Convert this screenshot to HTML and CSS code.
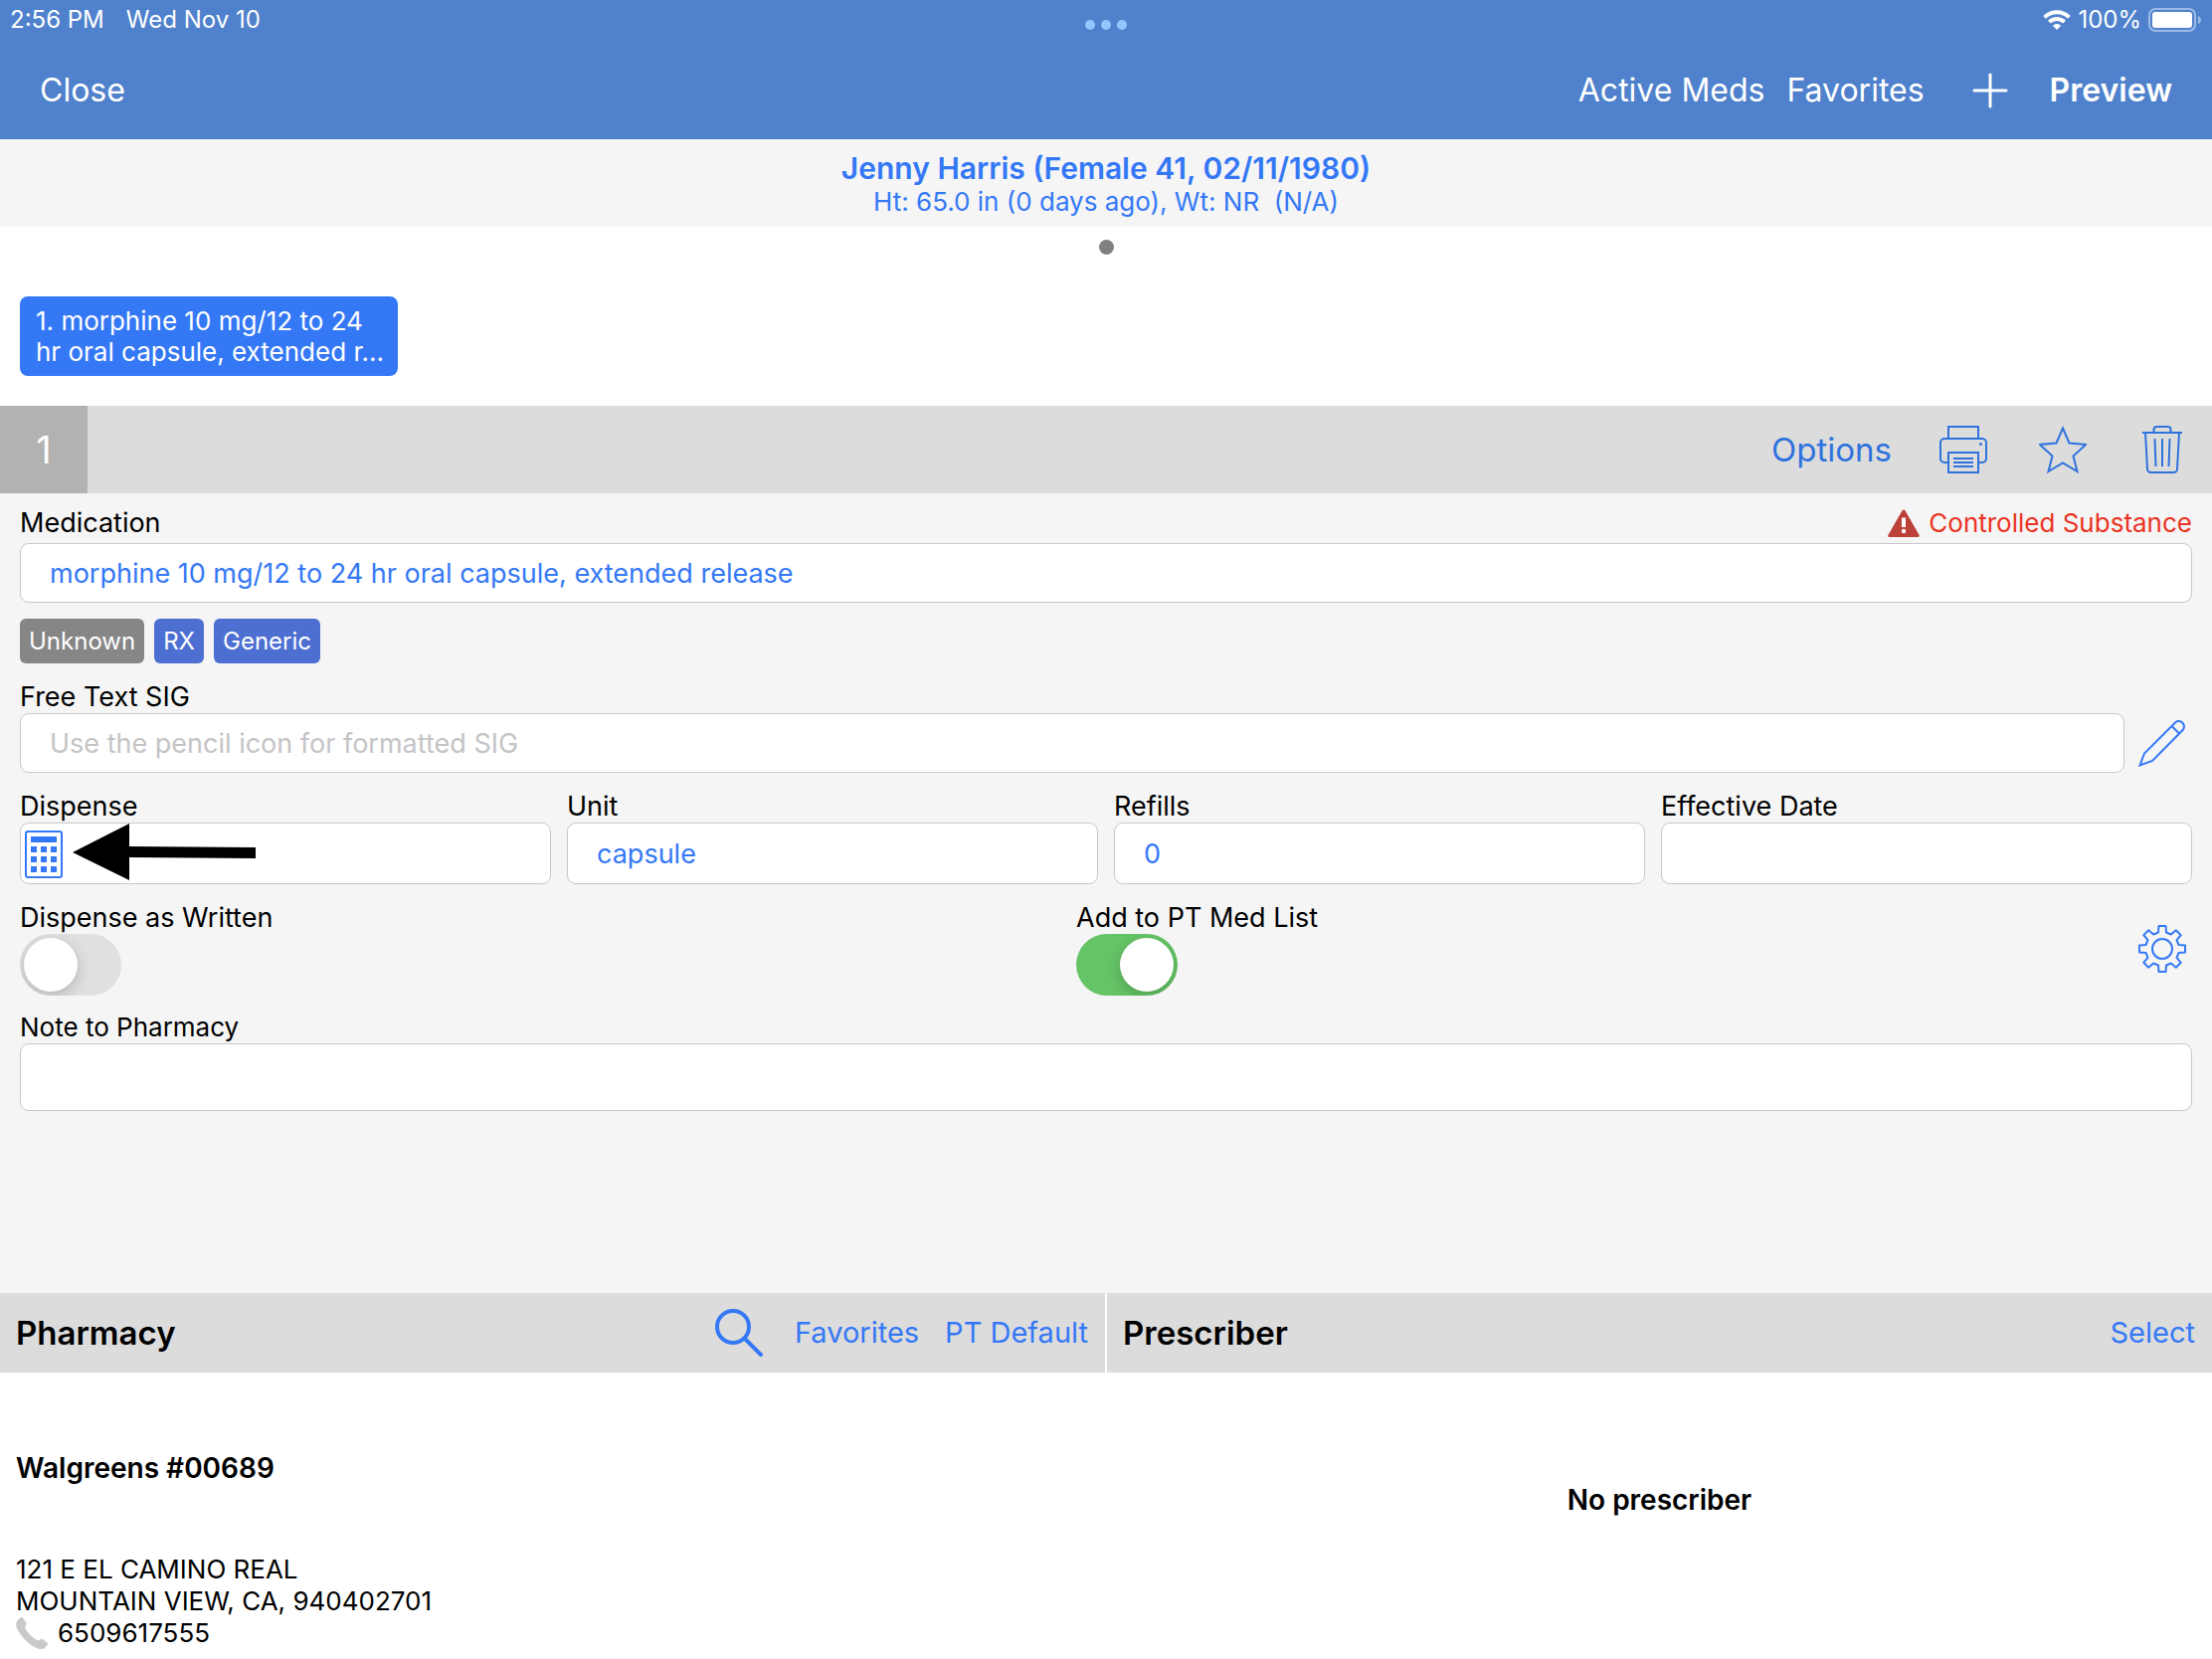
FILE: index.html
```html
<!DOCTYPE html>
<html lang="en">
<head>
<meta charset="utf-8">
<meta name="viewport" content="width=device-width, initial-scale=1">
<title>Prescription</title>
<link rel="stylesheet" href="styles.css">
</head>
<body>
<header class="topbar">
  <div class="status">
    <div class="status-side"><span>2:56 PM</span><span>Wed Nov 10</span></div>
    <div class="dots"><i></i><i></i><i></i></div>
    <div class="status-side status-end">
      <svg class="wifi" viewBox="0 0 28 20" fill="none" stroke="#fff" stroke-width="4"><path d="M1.6 7.4a17.6 17.6 0 0 1 24.8 0"/><path d="M6.4 12.2a10.8 10.8 0 0 1 15.2 0"/><path d="M14 20l-4.2-4.2a6 6 0 0 1 8.4 0z" fill="#fff" stroke="none"/></svg>
      <span>100%</span>
      <svg class="battery" viewBox="0 0 54 24"><rect x="1" y="1" width="46" height="22" rx="6" fill="none" stroke="#9bbbe6" stroke-width="2"/><rect x="4" y="4" width="40" height="16" rx="3" fill="#fff"/><path d="M50 8c4 1.500 4 6.500 0 8z" fill="#9bbbe6"/></svg>
    </div>
  </div>
  <nav class="nav">
    <button class="nav-btn close">Close</button>
    <button class="nav-btn">Active Meds</button>
    <button class="nav-btn">Favorites</button>
    <button class="nav-btn add" aria-label="Add"><svg viewBox="0 0 36 36" stroke="#fff" stroke-width="3" stroke-linecap="round"><path d="M18 2v32M2 18h32"/></svg></button>
    <button class="nav-btn strong">Preview</button>
  </nav>
</header>

<section class="patient">
  <h1>Jenny Harris (Female 41, 02/11/1980)</h1>
  <p>Ht: 65.0 in (0 days ago), Wt: NR &nbsp;(N/A)</p>
</section>

<section class="meds">
  <div class="page-dot"></div>
  <button class="med-chip">1. morphine 10 mg/12 to 24<br>hr oral capsule, extended r...</button>
</section>

<section class="med-bar">
  <div class="med-number">1</div>
  <div class="med-actions">
    <button class="options">Options</button>
    <button class="icon" aria-label="Print"><svg viewBox="0 0 48 48"><path d="M9 13V1h30v12"/><path d="M9 37H5a4 4 0 0 1-4-4V17a4 4 0 0 1 4-4h38a4 4 0 0 1 4 4v16a4 4 0 0 1-4 4h-4"/><path d="M9 27h30v20H9zM14 33h20M14 37h20M14 41h20"/><circle cx="41.500" cy="18.500" r="1.500" class="solid"/></svg></button>
    <button class="icon" aria-label="Favorite"><svg viewBox="0 0 48 48"><path d="M24 2.500l6.500 15 16.500 1.500-12.500 11.500 4 15.500L24 37.500 9.500 46l4-15.500L1 19l16.500-1.500z"/></svg></button>
    <button class="icon" aria-label="Delete"><svg viewBox="0 0 48 48"><path d="M4 7h40M15.500 7V4a3 3 0 0 1 3-3h11a3 3 0 0 1 3 3v3M7 7l2 36.500a3.500 3.500 0 0 0 3.500 3.500h23a3.500 3.500 0 0 0 3.500-3.500L41 7M16.500 13l1 28M24 13v28M31.500 13l-1 28"/></svg></button>
  </div>
</section>

<main class="form">
  <div class="field medication">
    <div class="label-row">
      <label for="med">Medication</label>
      <span class="warning"><svg viewBox="0 0 32 28"><path d="M16 0.500c.7 0 1.200.3 1.600 1L31.600 26c.6 1 .1 2-1.100 2h-29C.3 28-.2 27 .4 26L14.400 1.500c.4-.7.900-1 1.600-1z" fill="#bb4139"/><path d="M14 8.500h4v9.500h-4z" fill="#fff"/><circle cx="16" cy="22" r="2.200" fill="#fff"/></svg>Controlled Substance</span>
    </div>
    <input id="med" type="text" value="morphine 10 mg/12 to 24 hr oral capsule, extended release">
  </div>
  <div class="tags"><span class="tag tag-gray">Unknown</span><span class="tag">RX</span><span class="tag">Generic</span></div>
  <div class="field">
    <label for="sig">Free Text SIG</label>
    <div class="with-icon">
      <input id="sig" type="text" placeholder="Use the pencil icon for formatted SIG">
      <button class="icon" aria-label="Edit SIG"><svg viewBox="0 0 48 48"><path d="M1.500 46.500L6 34.500 37.500 3a5.500 5.500 0 0 1 6 0l1.500 1.500a5.500 5.500 0 0 1 0 6L14 42zM33.500 7l7.500 7.500"/></svg></button>
    </div>
  </div>
  <div class="grid">
    <div class="field">
      <label for="dispense">Dispense</label>
      <div class="calc-field">
        <input id="dispense" type="text">
        <button class="calc" aria-label="Calculate quantity"><svg viewBox="0 0 38 48"><rect x="1" y="1" width="36" height="46" rx="2" class="frame"/><path class="solid" d="M6 6h26v6H6zM6 16h6v6H6zM16 16h6v6h-6zM26 16h6v6h-6zM6 26h6v6H6zM16 26h6v6h-6zM26 26h6v6h-6zM6 36h6v6H6zM16 36h6v6h-6zM26 36h6v6h-6z"/></svg></button>
        <svg class="arrow" viewBox="0 0 184 58"><path d="M0 29L57 0v23l127 1v11L57 34v23z"/></svg>
      </div>
    </div>
    <div class="field"><label for="unit">Unit</label><input id="unit" type="text" value="capsule"></div>
    <div class="field"><label for="refills">Refills</label><input id="refills" type="text" value="0"></div>
    <div class="field"><label for="date">Effective Date</label><input id="date" type="text"></div>
  </div>
  <div class="switches">
    <div class="field"><label for="daw">Dispense as Written</label><input id="daw" class="switch" type="checkbox"></div>
    <div class="field"><label for="ptmed">Add to PT Med List</label><input id="ptmed" class="switch" type="checkbox" checked></div>
    <button class="icon" aria-label="Settings"><svg viewBox="0 0 48 48"><path stroke-linejoin="round" d="M20 7.500L20.500 1h7l.5 6.500 4.800 2 5-4.200 4.900 4.900-4.200 5 2 4.800 6.500.5v7l-6.500.5-2 4.800 4.200 5-4.900 4.900-5-4.200-4.800 2-.5 6.500h-7l-.5-6.500-4.800-2-5 4.200-4.900-4.900 4.200-5-2-4.800L1 27.500v-7l6.500-.5 2-4.800-4.200-5 4.900-4.900 5 4.200z"/><circle cx="24" cy="24" r="10"/></svg></button>
  </div>
  <div class="field note"><label for="note">Note to Pharmacy</label><input id="note" type="text"></div>
</main>

<div class="panels">
  <section class="panel">
    <div class="panel-head">
      <h2>Pharmacy</h2>
      <button class="icon search" aria-label="Search"><svg viewBox="0 0 48 48"><circle cx="18" cy="18" r="16"/><path d="M29.500 29.500L46 46" stroke-linecap="round"/></svg></button>
      <button class="link">Favorites</button>
      <button class="link">PT Default</button>
    </div>
    <div class="pharmacy">
      <h3>Walgreens #00689</h3>
      <address>121 E EL CAMINO REAL<br>MOUNTAIN VIEW, CA, 940402701
        <span class="phone"><svg viewBox="0 0 32 32"><path d="M4.500.5c1-.7 2-.4 2.600.5l3.200 4.500c.7 1 .4 1.800-.3 2.600-1.300 1.400-.9 2.700.3 4.700 2.500 4 5.600 7 9.500 9.500 1.800 1.200 3.200 1.500 4.500.2.900-.9 1.800-1 2.700-.3l4.200 3c1.100.8 1.100 1.900.3 2.900-2.500 3.500-5.500 5-10 3.200C12.500 27.500 4.500 19 .8 10.500-.8 6.500.8 2.900 4.500.5z" fill="#c9c9c9"/></svg>6509617555</span>
      </address>
    </div>
  </section>
  <section class="panel">
    <div class="panel-head"><h2>Prescriber</h2><button class="link">Select</button></div>
    <h3 class="empty">No prescriber</h3>
  </section>
</div>
</body>
</html>
```
FILE: styles.css
```css
* { box-sizing: border-box; }
body { margin: 0; background: #fff; color: #000; font: 27px/32px Inter, "Liberation Sans", sans-serif; }
h1, h2, h3, p { margin: 0; }
button { border: 0; padding: 0; margin: 0; background: none; font: inherit; color: #3478f6; text-align: left; }
svg { display: block; }

.topbar { background: #4f81cc; color: #fff; height: 140px; }
.status { display: grid; grid-template-columns: 1fr auto 1fr; height: 40px; padding: 0 10px; font-size: 24px; align-items: center; }
.status-side { display: flex; align-items: center; gap: 22px; }
.status-end { justify-content: flex-end; gap: 7px; }
.wifi { width: 28px; height: 20px; }
.battery { width: 54px; height: 24px; }
.dots { display: flex; gap: 6px; padding-top: 10px; }
.dots i { width: 10px; height: 10px; border-radius: 50%; background: #93c5ff; }
.nav { display: flex; align-items: center; height: 102px; padding: 0 40px; }
.nav-btn { color: #fff; font-size: 32px; margin-left: 22px; }
.nav-btn.close { margin: 0 auto 0 0; }
.nav-btn.add { width: 36px; margin: 0 20px 0 48px; }
.nav-btn.strong { font-weight: 600; }

.patient { height: 88px; padding-top: 12px; background: #f5f5f5; color: #3478f6; text-align: center; }
.patient h1 { font-size: 30px; line-height: 34px; font-weight: 600; }
.patient p { font-size: 26px; line-height: 34px; }

.meds { height: 180px; padding: 13px 20px 0; }
.page-dot { width: 15px; height: 15px; margin: 0 auto 42px; border-radius: 50%; background: #808080; }
.med-chip { display: block; width: 380px; height: 80px; padding: 0 8px 0 16px; border-radius: 8px; background: #3478f6; color: #fff; font-size: 26px; line-height: 31px; white-space: nowrap; }

.med-bar { display: flex; height: 88px; background: #dcdcdc; }
.med-number { width: 88px; background: #b2b2b2; color: #fff; font-size: 38px; line-height: 88px; text-align: center; }
.med-actions { display: flex; align-items: center; gap: 52px; margin-left: auto; padding-right: 26px; }
.med-actions button { color: #2f72de; }
.options { font-size: 33px; margin-right: -4px; }
.icon { width: 48px; height: 48px; flex: none; }
.icon svg { width: 48px; height: 48px; fill: none; stroke: currentColor; stroke-width: 2; }
.icon .solid { fill: currentColor; stroke: none; }

.form { min-height: 804px; padding: 14px 20px; background: #f5f5f5; }
.field { display: flex; flex-direction: column; }
.label-row { display: flex; justify-content: space-between; padding-bottom: 4px; }
.warning { display: flex; align-items: center; gap: 9px; color: #eb3323; font-size: 26px; }
.warning svg { width: 32px; height: 28px; }
input[type="text"] { width: 100%; height: 60px; padding: 0 29px; border: 1px solid #c8c8c8; border-radius: 9px; background: #fff; color: #3478f6; font: inherit; }
input::placeholder { color: #c4c4c6; opacity: 1; }
.tags { display: flex; gap: 10px; padding: 16px 0 18px; }
.tag { padding: 0 9px; border-radius: 6px; background: #4d6fd2; color: #fff; font-size: 24px; line-height: 45px; }
.tag-gray { background: #868686; }
.with-icon { display: flex; align-items: center; gap: 14px; padding-right: 6px; }
.grid { display: grid; grid-template-columns: repeat(4, 1fr); gap: 16px; padding-top: 18px; }
.grid input[type="text"] { height: 62px; }
.calc-field { position: relative; }
.calc { position: absolute; left: 5px; top: 8px; }
.calc svg { width: 38px; height: 48px; fill: #3478f6; }
.calc .frame { fill: none; stroke: #3478f6; stroke-width: 2; }
.arrow { position: absolute; left: 53px; top: 1px; width: 184px; height: 58px; }
.switches { display: grid; grid-template-columns: calc(50% - 27px) 1fr 48px; padding: 18px 6px 0 0; align-items: center; }
.switch { appearance: none; position: relative; width: 102px; height: 62px; margin: 0; border-radius: 31px; background: #e0e0e0; overflow: hidden; }
.switch::before { content: ""; position: absolute; left: 4px; top: 4px; width: 54px; height: 54px; border-radius: 50%; background: #fff; box-shadow: 0 4px 14px rgba(0, 0, 0, .2); }
.switch:checked { background: #65c466; }
.switch:checked::before { left: 44px; }
.note { padding-top: 16px; font-size: 26px; }
.note input[type="text"] { height: 68px; }

.panels { display: grid; grid-template-columns: 1fr 1fr; gap: 2px; }
.panel-head { display: flex; align-items: center; height: 80px; padding: 0 17px 0 16px; background: #dcdcdc; }
h2 { margin-right: auto; font-size: 33px; font-weight: 600; }
.link { margin-left: 26px; font-size: 29px; }
.search { margin-right: 6px; }
.icon.search svg { stroke-width: 4; }
h3 { font-size: 28px; font-weight: 600; }
.pharmacy { padding: 80px 16px 8px; }
address { margin-top: 70px; font-size: 26px; font-style: normal; }
.phone { display: flex; align-items: center; gap: 10px; }
.phone svg { width: 32px; height: 32px; }
.empty { padding-top: 112px; text-align: center; }
```
